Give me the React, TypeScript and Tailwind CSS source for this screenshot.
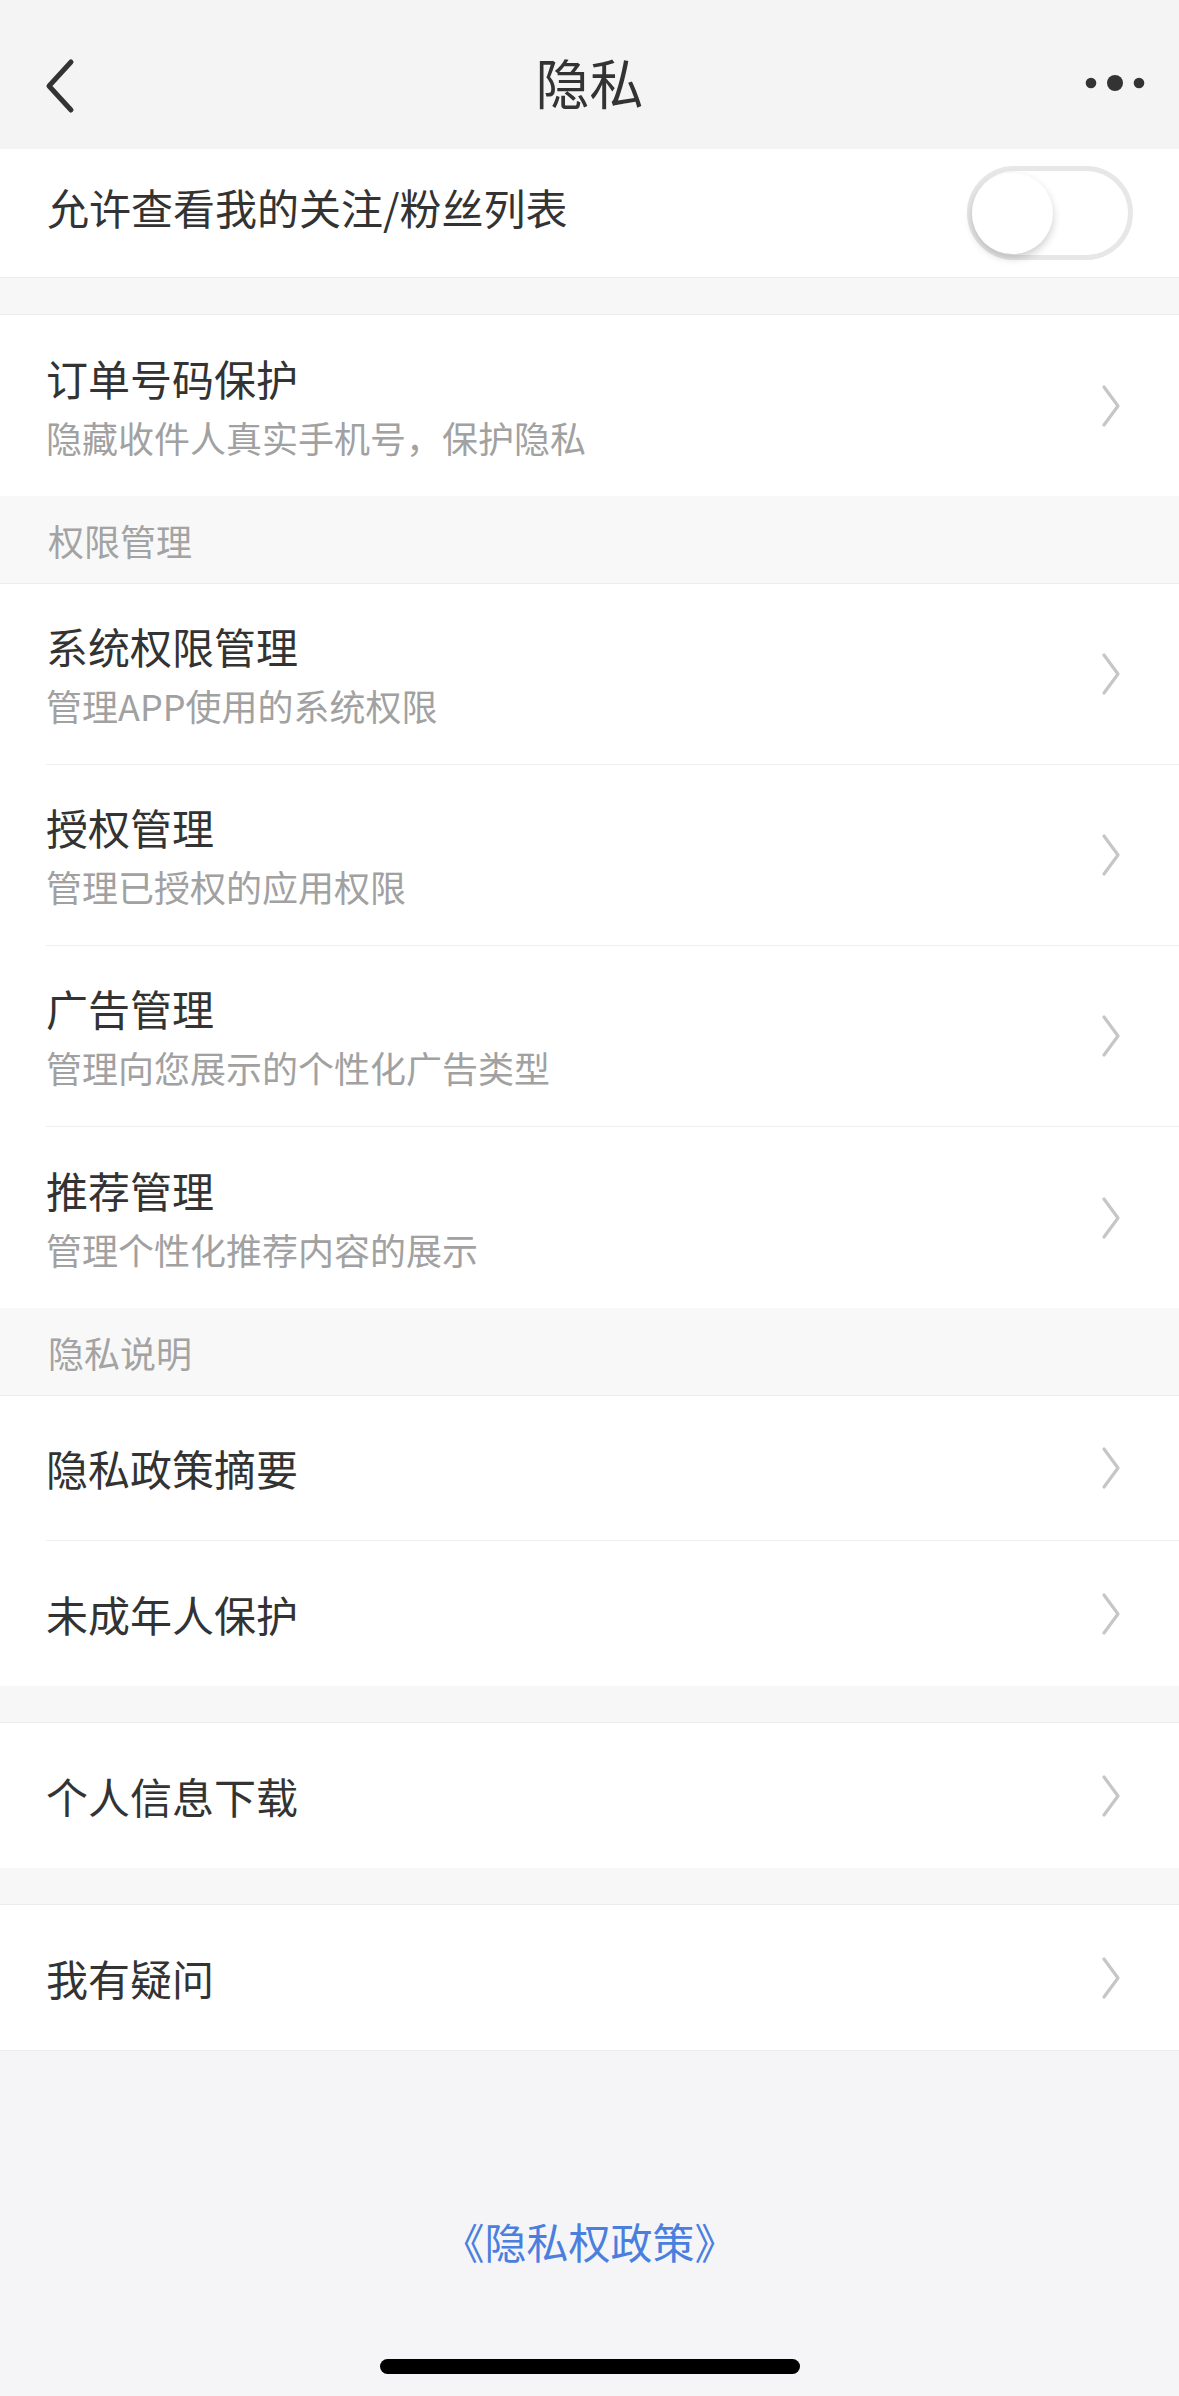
const font = { fontFamily: '"Noto Sans CJK SC", "Noto Sans", sans-serif' };

const Chevron = () => (
  <svg width="20" height="44" viewBox="0 0 20 44" className="mr-[58px] shrink-0">
    <polyline points="3,3 17,22 3,41" fill="none" stroke="#c6c6c6" strokeWidth="3.2" strokeLinecap="round" strokeLinejoin="round" />
  </svg>
);

interface RowProps {
  title: string;
  sub?: string;
  last?: boolean;
}

const Row = ({ title, sub, last }: RowProps) => (
  <div className={`flex items-center bg-white ${sub ? 'h-[181px]' : 'h-[145px]'}`}>
    <div
      className={`flex-1 h-full flex items-center ml-[46px] ${last ? '' : 'border-b border-[#efefef]'}`}
    >
      <div className="flex-1 flex flex-col">
        <span className="text-[42px] leading-[50px] text-[#333333]">{title}</span>
        {sub && <span className="mt-[12px] text-[36px] leading-[44px] text-[#a1a1a1]">{sub}</span>}
      </div>
      <Chevron />
    </div>
  </div>
);

const SectionTitle = ({ text }: { text: string }) => (
  <div className="h-[88px] flex items-center pl-[48px] bg-[#f8f8f8] border-b border-[#ececec]">
    <span className="text-[36px] leading-[44px] text-[#a3a3a3]">{text}</span>
  </div>
);

const Gap = () => <div className="h-[37px] bg-[#f7f7f7] border-b border-[#ececec]" />;

export default function App() {
  return (
    <div className="min-h-[2396px] w-[1179px] flex flex-col bg-[#f5f5f7]" style={font}>
      {/* nav bar */}
      <div className="h-[149px] grid grid-cols-[1fr_auto_1fr] items-start bg-[#f4f4f4]">
        <div className="pt-[58px] pl-[44px]">
          <svg width="34" height="56" viewBox="0 0 34 56">
            <polyline points="27,4 5,28 27,52" fill="none" stroke="#333333" strokeWidth="5" strokeLinecap="round" strokeLinejoin="round" />
          </svg>
        </div>
        <div className="pt-[50px] text-[54px] leading-[64px] text-[#333333]">隐私</div>
        <div className="pt-[74px] pr-[34px] flex justify-end">
          <svg width="60" height="18" viewBox="0 0 60 18">
            <circle cx="6" cy="9" r="5.3" fill="#333333" />
            <circle cx="30" cy="9" r="8" fill="#333333" />
            <circle cx="54" cy="9" r="5.3" fill="#333333" />
          </svg>
        </div>
      </div>

      {/* toggle row */}
      <div className="h-[129px] flex items-center justify-between bg-white border-b border-[#ececec]">
        <span className="pl-[47px] pb-[12px] text-[42px] leading-[50px] text-[#333333]">允许查看我的关注/粉丝列表</span>
        <div className="mr-[46px] w-[166px] h-[94px] rounded-full border-[5px] border-[#e7e7e7] bg-white flex items-center">
          <div className="w-[81px] h-[81px] rounded-full bg-white shadow-[0_4px_8px_rgba(0,0,0,0.2)]" />
        </div>
      </div>

      <Gap />
      <Row title="订单号码保护" sub="隐藏收件人真实手机号，保护隐私" last />

      <SectionTitle text="权限管理" />
      <Row title="系统权限管理" sub="管理APP使用的系统权限" />
      <Row title="授权管理" sub="管理已授权的应用权限" />
      <Row title="广告管理" sub="管理向您展示的个性化广告类型" />
      <Row title="推荐管理" sub="管理个性化推荐内容的展示" last />

      <SectionTitle text="隐私说明" />
      <Row title="隐私政策摘要" />
      <Row title="未成年人保护" last />

      <Gap />
      <Row title="个人信息下载" last />

      <Gap />
      <Row title="我有疑问" last />

      {/* footer */}
      <div className="flex-1 flex flex-col items-center border-t border-[#ececec] pt-[163px]">
        <span className="text-[42px] leading-[54px] text-[#4a7fde]">《隐私权政策》</span>
        <div className="mt-[91px] w-[420px] h-[15px] rounded-full bg-black" />
      </div>
    </div>
  );
}
